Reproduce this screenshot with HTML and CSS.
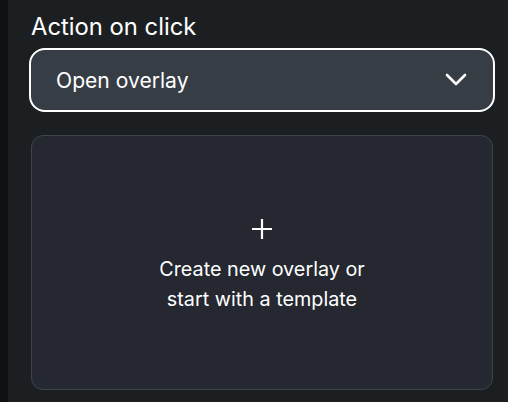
FILE: index.html
```html
<!doctype html>
<html lang="en">
<head>
    <meta charset="UTF-8">
    <title>Action on click</title>
    <link rel="stylesheet" href="styles.css">
</head>
<body>
    <div class="layout">
        <div class="rail"></div>
        <div class="panel">
            <label class="field-label">Action on click</label>
            <div class="select">
                <span>Open overlay</span>
                <svg class="chevron" width="22" height="14" viewBox="0 0 22 14">
                    <path d="M2 2 L11 11 L20 2" fill="none" stroke="#fff" stroke-width="2.6" stroke-linecap="round" stroke-linejoin="round"/>
                </svg>
            </div>
            <div class="overlay-card">
                <svg class="plus" width="22" height="22" viewBox="0 0 22 22">
                    <path d="M11 1 V21 M1 11 H21" stroke="#fff" stroke-width="2.2"/>
                </svg>
                <p>Create new overlay or<br>start with a template</p>
            </div>
        </div>
    </div>
</body>
</html>
```

FILE: styles.css
```css
body {
    margin: 0;
    background-color: #1b1f22;
    color: #fff;
    font-family: 'Inter', sans-serif;
}
.layout {
    display: flex;
    height: 402px;
}
.rail {
    width: 8px;
    background-color: #0f1215;
}
.panel {
    flex: 1;
    padding: 12px 13px 0 21px;
}
.field-label {
    display: block;
    font-size: 23.8px;
    line-height: 29px;
    padding-left: 2px;
    margin-bottom: 7px;
}
.select {
    display: flex;
    align-items: center;
    justify-content: space-between;
    height: 60px;
    padding: 0 26px 0 25px;
    border: 2.5px solid #fff;
    border-radius: 16px;
    background-color: #373d45;
    font-size: 21.1px;
}
.overlay-card {
    display: flex;
    flex-direction: column;
    align-items: center;
    justify-content: center;
    height: 253px;
    margin: 23px 2px 0;
    border: 1px solid #3f444c;
    border-radius: 12px;
    background-color: #252830;
}
.plus {
    margin-top: 6px;
}
.overlay-card p {
    margin: 14px 0 0;
    font-size: 19.8px;
    line-height: 30px;
    text-align: center;
}
```
